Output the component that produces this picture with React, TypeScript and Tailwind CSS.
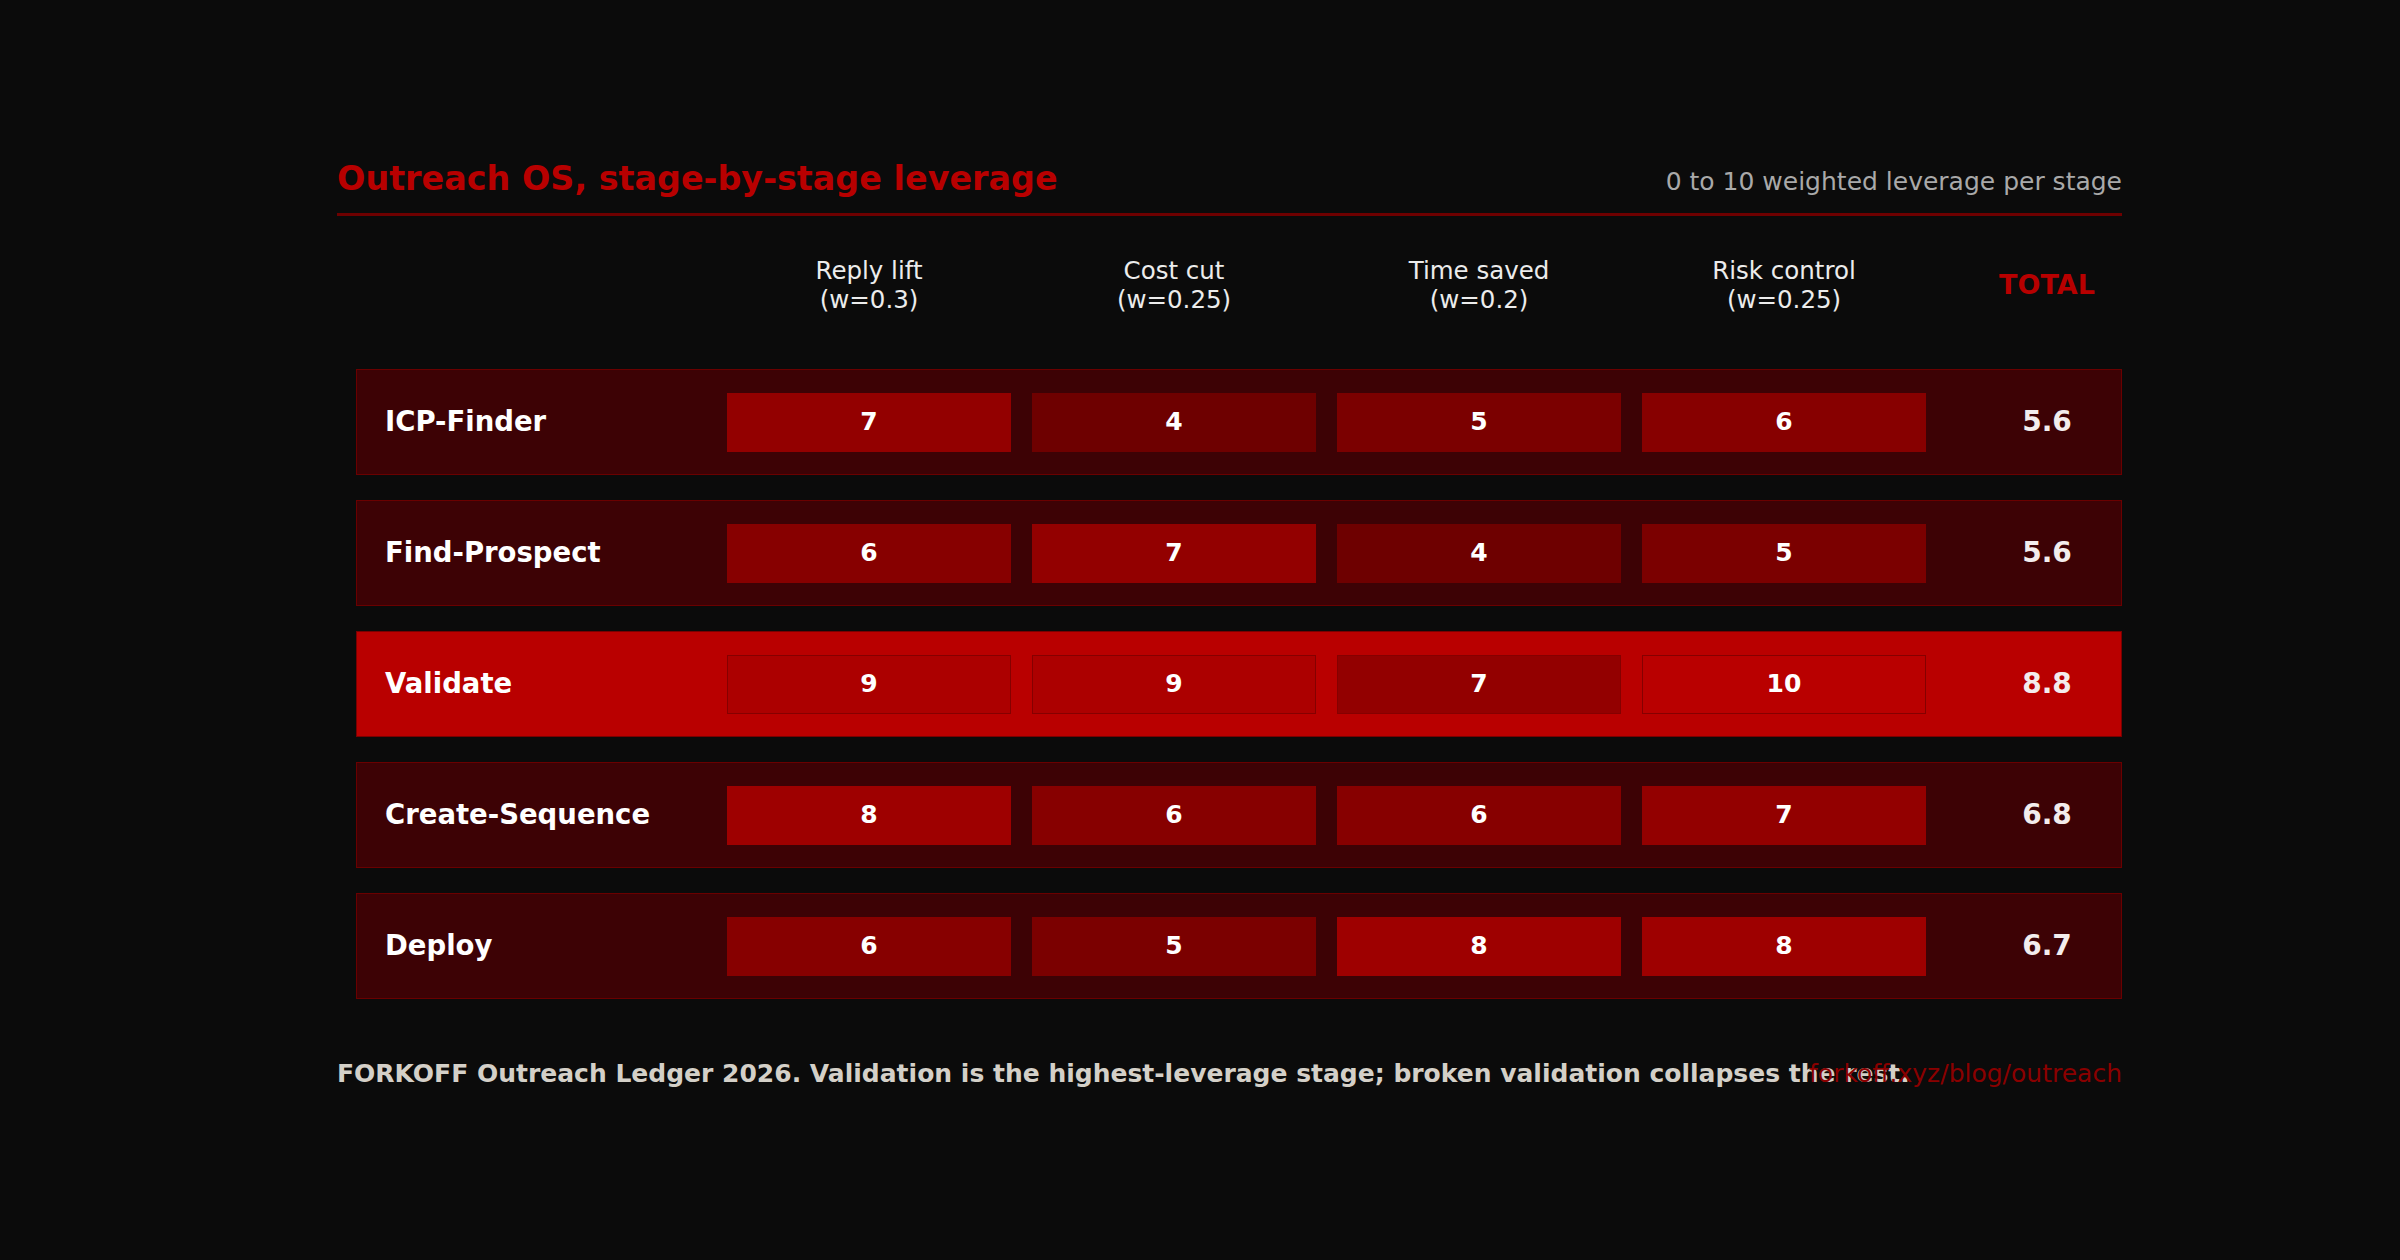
const STAGES = [
  { name: 'ICP-Finder', scores: [7, 4, 5, 6], total: '5.6' },
  { name: 'Find-Prospect', scores: [6, 7, 4, 5], total: '5.6' },
  { name: 'Validate', scores: [9, 9, 7, 10], total: '8.8', hot: true },
  { name: 'Create-Sequence', scores: [8, 6, 6, 7], total: '6.8' },
  { name: 'Deploy', scores: [6, 5, 8, 8], total: '6.7' },
];

const COLUMNS = [
  ['Reply lift', '(w=0.3)'],
  ['Cost cut', '(w=0.25)'],
  ['Time saved', '(w=0.2)'],
  ['Risk control', '(w=0.25)'],
];

// score -> chip fill, darkest at 4, brightest at 10
const CHIP_BG: Record<number, string> = {
  4: 'bg-[#6e0000]',
  5: 'bg-[#7b0000]',
  6: 'bg-[#870000]',
  7: 'bg-[#930000]',
  8: 'bg-[#9e0000]',
  9: 'bg-[#ac0000]',
  10: 'bg-[#b90000]',
};

const GRID = 'grid grid-cols-[321px_284px_284px_284px_284px_1fr] gap-x-[21px] items-center';

export default function App() {
  return (
    <div className="min-h-screen bg-[#0b0b0b] font-['DejaVu_Sans','Liberation_Sans',sans-serif]">
      <div className="pl-[337px] pr-[278px] pt-[159px] pb-16">
        {/* Title */}
        <div className="flex items-baseline justify-between pb-[14px] border-b-[3px] border-[#6e0000]">
          <h1 className="text-[33.4px] leading-[40px] font-bold text-[#b80000]">Outreach OS, stage-by-stage leverage</h1>
          <span className="text-[25px] leading-[29px] text-[#a9a9a9]">0 to 10 weighted leverage per stage</span>
        </div>

        <div className="ml-[19px]">
          {/* Column heads */}
          <div className={`${GRID} mt-[40px] mb-[55px] pl-[29px] pr-px`}>
            <div />
            {COLUMNS.map(([a, b]) => (
              <div key={a} className="text-center text-[24.5px] leading-[29px] text-[#ececec]">
                <div>{a}</div>
                <div>{b}</div>
              </div>
            ))}
            <div className="pl-[26px] text-center text-[27px] font-bold text-[#b80000]">TOTAL</div>
          </div>

          {/* Stage rows */}
          <div className="flex flex-col gap-[25px]">
            {STAGES.map((s) => (
              <div
                key={s.name}
                className={`${GRID} h-[106px] pl-[28px] border ${
                  s.hot ? 'bg-[#b90000] border-[#7a0000]' : 'bg-[#3d0205] border-[#6a0000]'
                }`}
              >
                <div className="text-[27.5px] font-bold text-white">{s.name}</div>
                {s.scores.map((v, i) => (
                  <div
                    key={i}
                    className={`h-[59px] flex items-center justify-center text-[25px] font-bold text-white border ${CHIP_BG[v]} ${
                      s.hot ? 'border-[#850000]' : 'border-transparent'
                    }`}
                  >
                    {v}
                  </div>
                ))}
                <div className="pl-[26px] text-center text-[28px] font-bold text-[#f3eded]">{s.total}</div>
              </div>
            ))}
          </div>
        </div>

        {/* Footer */}
        <div className="relative mt-[60px] text-[25px] leading-[29px]">
          <p className="font-bold text-[#d4d0c8]">
            FORKOFF Outreach Ledger 2026. Validation is the highest-leverage stage; broken validation collapses the rest.
          </p>
          <span className="absolute right-0 top-0 text-[#8a0000]">forkoff.xyz/blog/outreach</span>
        </div>
      </div>
    </div>
  );
}
